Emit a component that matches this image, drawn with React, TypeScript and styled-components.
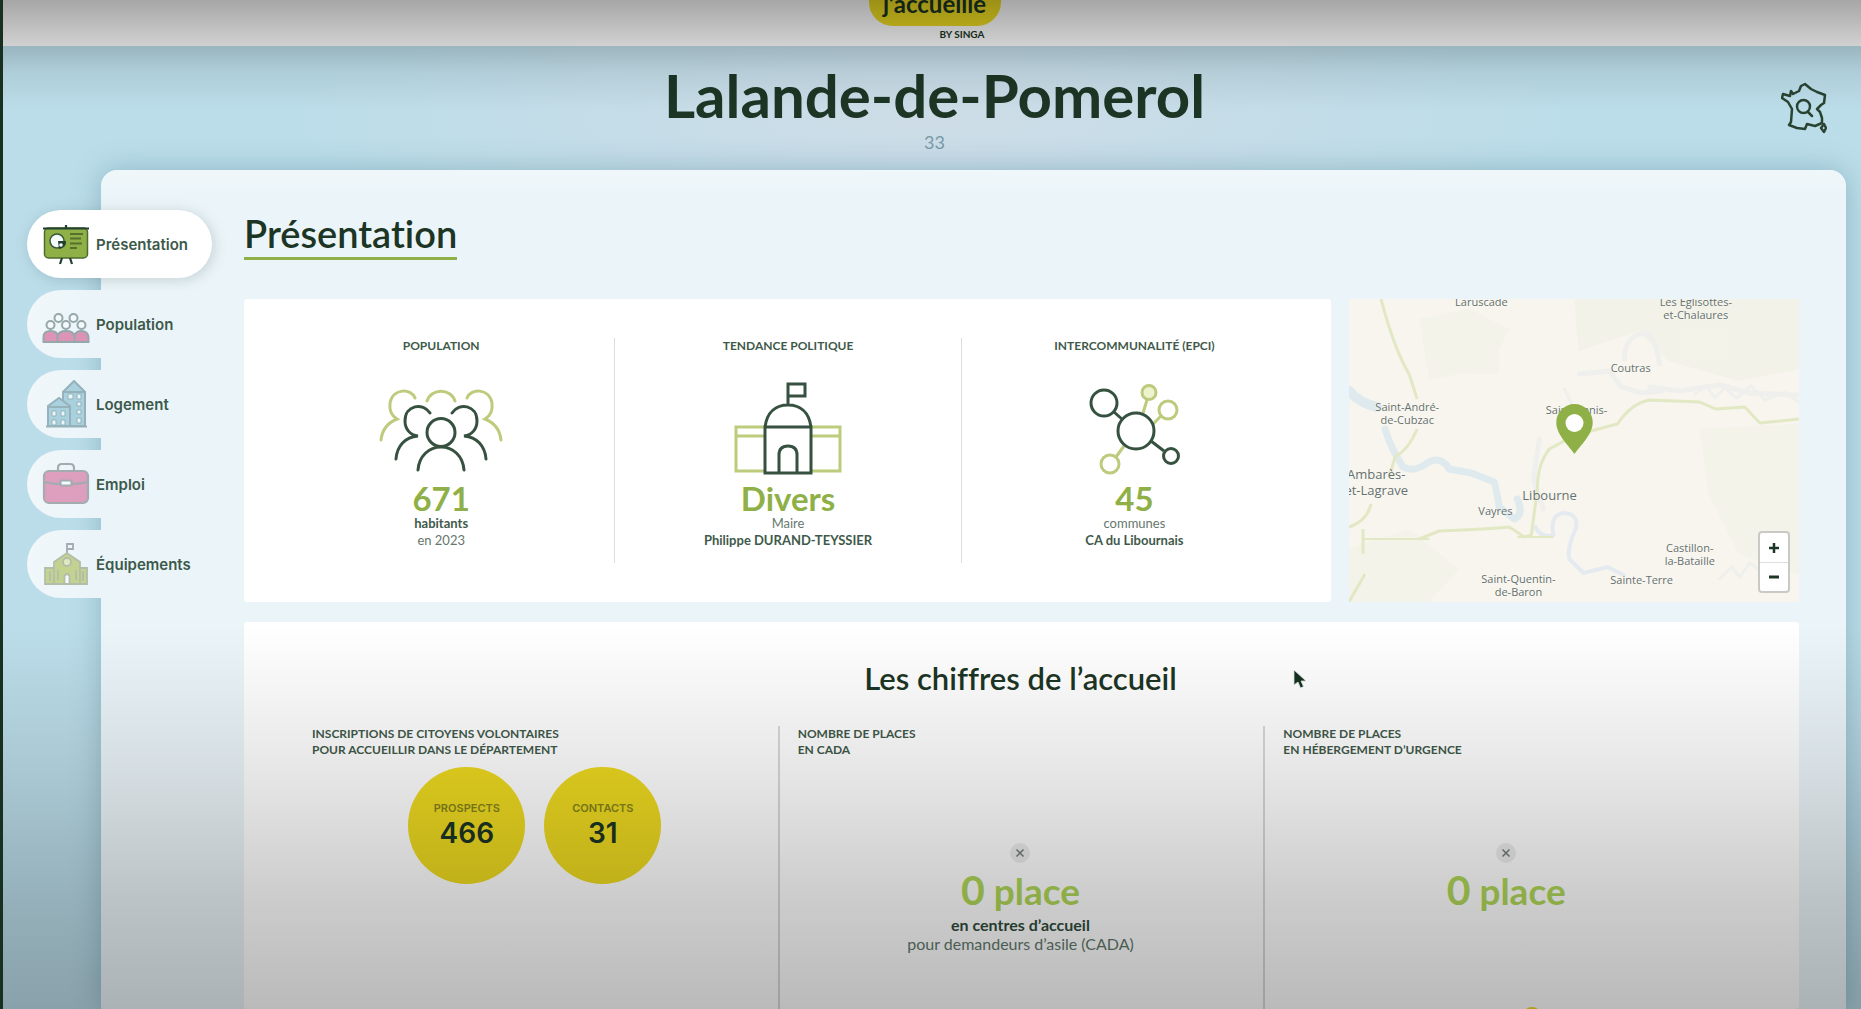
import React from "react";
import styled, { createGlobalStyle, css } from "styled-components";

const DARK = "#1c3524";
const GREEN = "#8fb046";

const Global = createGlobalStyle`
  *, *::before, *::after { box-sizing: border-box; }
  html, body { margin: 0; height: 100%; }
  body {
    font-family: Lato, "Liberation Sans", sans-serif;
    font-variant-ligatures: no-common-ligatures;
    color: ${DARK};
    overflow: hidden;
  }
  h1, h2, p { margin: 0; }
`;

const Page = styled.div`
  position: relative;
  height: 100vh;
  overflow: hidden;
  display: flex;
  flex-direction: column;
  border-left: 3px solid #18301f;
  background:
    radial-gradient(ellipse 640px 120px at 50% 120px, rgba(214, 220, 230, 0.7), rgba(214, 220, 230, 0)),
    #bbdde9;
`;

const Shade = styled.div`
  position: absolute;
  inset: 0;
  z-index: 5;
  pointer-events: none;
  background:
    linear-gradient(rgba(0, 0, 0, 0.35) 0, rgba(0, 0, 0, 0.18) 46px, rgba(0, 0, 0, 0.07) 72px, rgba(0, 0, 0, 0) 110px),
    linear-gradient(rgba(0, 0, 0, 0) 62%, rgba(0, 0, 0, 0.04) 68%, rgba(0, 0, 0, 0.1) 77%, rgba(0, 0, 0, 0.2) 89%, rgba(0, 0, 0, 0.27) 100%);
`;

const TopBar = styled.header`
  flex: none;
  height: 46px;
  padding-left: 5px;
  display: flex;
  justify-content: center;
  align-items: flex-end;
  background: #fff;
`;

const Brand = styled.a`
  display: flex;
  flex-direction: column;
  align-items: center;
  color: ${DARK};
  text-decoration: none;
`;

const BrandPill = styled.span`
  display: block;
  width: 132px;
  height: 56px;
  padding: 20px 0 0;
  border-radius: 24px;
  background: #f0de22;
  font-size: 24px;
  line-height: 28px;
  font-weight: 700;
  text-align: center;
`;

const BrandBy = styled.span`
  align-self: flex-end;
  padding: 0 16px 4px 0;
  font-size: 10px;
  line-height: 16px;
  font-weight: 700;
`;

const Hero = styled.div`
  flex: none;
  height: 124px;
  padding: 15px 34px 0 39px;
  display: grid;
  grid-template-columns: 48px 1fr 48px;
`;

const HeroText = styled.div`
  grid-column: 2;
  text-align: center;
`;

const City = styled.h1`
  font-size: 60px;
  line-height: 68px;
  font-weight: 700;
`;

const Dept = styled.p`
  font-size: 18px;
  line-height: 26px;
  color: #7899a4;
`;

const MapButton = styled.button`
  align-self: start;
  justify-self: end;
  margin: 21px 0 0;
  padding: 0;
  border: 0;
  background: none;
  line-height: 0;
`;

const Body = styled.div`
  flex: 1;
  min-height: 0;
  display: flex;
  padding: 0 15px 0 24px;
`;

const Nav = styled.nav`
  position: relative;
  z-index: 2;
  flex: none;
  width: 74px;
  padding-top: 40px;
  display: flex;
  flex-direction: column;
  gap: 12px;
`;

const NavLink = styled.a<{ $active?: boolean }>`
  flex: none;
  width: 185px;
  height: 68px;
  padding-left: 15px;
  display: flex;
  align-items: center;
  gap: 6px;
  border-radius: 34px;
  background: linear-gradient(90deg, #f1f7fb, #ebf5f9 60px);
  color: #3c594a;
  font-family: Inter, "Liberation Sans", sans-serif;
  font-size: 15px;
  font-weight: 600;
  text-decoration: none;
  ${(p) =>
    p.$active &&
    css`
      background: #fff;
      box-shadow: 2px 2px 14px rgba(60, 80, 90, 0.22);
    `}
`;

const NavIcon = styled.svg<{ $faded?: boolean }>`
  flex: none;
  width: 48px;
  height: 48px;
  opacity: ${(p) => (p.$faded ? 0.45 : 1)};
`;

const Panel = styled.main`
  flex: 1;
  min-width: 0;
  padding: 41px 47px 0 143px;
  display: flex;
  flex-direction: column;
  border-radius: 16px 16px 0 0;
  background: linear-gradient(#f0f7fa 0, #ebf5f9 24px, #ebf5f9 60%, #ebf4f9 100%);
  box-shadow: 0 0 28px rgba(60, 110, 130, 0.35);
`;

const Heading = styled.h2`
  align-self: flex-start;
  border-bottom: 3px solid ${GREEN};
  padding-bottom: 2px;
  font-size: 38px;
  line-height: 44px;
  font-weight: 600;
`;

const TopGrid = styled.div`
  flex: none;
  margin-top: 39px;
  display: grid;
  grid-template-columns: 29fr 12fr;
  gap: 18px;
`;

const Card = styled.section`
  padding: 39px 24px;
  background: #fff;
  border-radius: 3px;
`;

const StatRow = styled.div`
  display: grid;
  grid-template-columns: repeat(3, 1fr);
`;

const Stat = styled.article`
  height: 225px;
  display: flex;
  flex-direction: column;
  align-items: center;
  text-align: center;
  & + & { border-left: 1px solid #d9dddd; }
`;

const Label = styled.p`
  font-size: 12px;
  line-height: 16px;
  font-weight: 700;
  color: #3f5a4a;
`;

const StatIcon = styled.svg`
  flex: none;
  width: 128px;
  height: 96px;
  margin: 26px 0 5px;
  fill: none;
  stroke-width: 3;
`;

const Value = styled.p`
  font-size: 33px;
  line-height: 34px;
  font-weight: 700;
  color: ${GREEN};
`;

const Note = styled.p<{ $strong?: boolean }>`
  font-size: 13px;
  line-height: 17px;
  font-weight: ${(p) => (p.$strong ? 700 : 400)};
  color: ${(p) => (p.$strong ? "#3f5a4a" : "#66776e")};
`;

const MapBox = styled.section`
  position: relative;
  overflow: hidden;
  background: #f7f5ee;
`;

const MapArt = styled.svg`
  display: block;
  position: absolute;
  inset: 0;
  width: 100%;
  height: 100%;
`;

const Place = styled.span<{ $big?: boolean }>`
  position: absolute;
  transform: translate(-50%, 0);
  font-family: "Open Sans", "Noto Sans", sans-serif;
  font-size: ${(p) => (p.$big ? 13 : 11)}px;
  line-height: ${(p) => (p.$big ? 16 : 13)}px;
  text-align: center;
  white-space: pre;
  color: #66706c;
  text-shadow: 0 0 2px #fff;
`;

const Pin = styled.svg`
  position: absolute;
  left: 46%;
  top: 105px;
  width: 37px;
  height: 50px;
`;

const Zoom = styled.div`
  position: absolute;
  right: 9px;
  bottom: 9px;
  width: 32px;
  display: flex;
  flex-direction: column;
  border: 2px solid #c9c9c6;
  border-radius: 4px;
  background: #fff;
`;

const ZoomButton = styled.button`
  height: 29px;
  padding: 0;
  border: 0;
  background: none;
  line-height: 0;
  color: ${DARK};
  & + & { border-top: 1px solid #ddd; }
`;

const Figures = styled.section`
  flex: 1;
  margin-top: 20px;
  padding: 36px 50px 0 48px;
  display: flex;
  flex-direction: column;
  background: #fff;
  border-radius: 3px;
`;

const FiguresTitle = styled.h2`
  font-size: 31px;
  line-height: 40px;
  font-weight: 600;
  text-align: center;
`;

const FigureRow = styled.div`
  flex: 1;
  margin-top: 28px;
  display: grid;
  grid-template-columns: repeat(3, 1fr);
`;

const Figure = styled.article`
  position: relative;
  display: flex;
  flex-direction: column;
  align-items: center;
  padding: 0 20px;
  & + & {
    padding-left: 18px;
    border-left: 2px solid #d6dada;
  }
`;

const FigureLabel = styled(Label)`
  align-self: flex-start;
  white-space: pre-line;
`;

const Bubbles = styled.div`
  display: flex;
  gap: 19px;
  padding-top: 9px;
`;

const Bubble = styled.div`
  width: 117px;
  height: 117px;
  padding-top: 33px;
  border-radius: 50%;
  background: #eeda20;
  font-family: Inter, "Liberation Sans", sans-serif;
  text-align: center;
`;

const BubbleLabel = styled.p`
  font-size: 11px;
  line-height: 16px;
  font-weight: 600;
  color: #84831a;
`;

const BubbleValue = styled.p`
  font-size: 28px;
  line-height: 34px;
  font-weight: 600;
`;

const Badge = styled.svg`
  width: 20px;
  height: 20px;
  margin: 85px 0 3px;
`;

const Places = styled.p`
  font-size: 37px;
  line-height: 48px;
  font-weight: 700;
  color: #b0d758;
`;

const Zero = styled.span`
  font-size: 41px;
`;

const PlacesNote = styled.p<{ $strong?: boolean }>`
  font-size: 16px;
  line-height: 19px;
  font-weight: ${(p) => (p.$strong ? 700 : 400)};
  color: ${(p) => (p.$strong ? "#2f4c3c" : "#5f796c")};
`;

const NextDot = styled.span`
  position: absolute;
  left: 53%;
  bottom: -18px;
  width: 20px;
  height: 20px;
  border-radius: 50%;
  background: #eeda20;
`;

const Cursor = styled.svg`
  position: absolute;
  left: 1290px;
  top: 669px;
  width: 14px;
  height: 20px;
  z-index: 6;
`;

const PresentationIcon = () => (
  <NavIcon viewBox="0 0 48 48">
    <rect x="2.500" y="8" width="43" height="30" rx="4" fill="#8fb046" stroke="#4d6b2f" strokeWidth="1.500" />
    <path d="M1 8.500h46M24 5v3M20 38l-2 6M28 38l2 6" stroke="#22402f" strokeWidth="2.200" fill="none" />
    <circle cx="15" cy="21" r="7" fill="#f4fafa" stroke="#38573b" strokeWidth="1.500" />
    <path d="M16 21h8a7 7 0 0 1-7 8z" fill="#22402f" />
    <circle cx="19" cy="25" r="1.800" fill="#f4fafa" />
    <path d="M28 14h13M28 18.500h11M28 23.500h12M28 28h7" stroke="#55702a" strokeWidth="1.800" />
  </NavIcon>
);

const PeopleIcon = () => (
  <NavIcon viewBox="0 0 48 48" $faded>
    <g fill="#fff" stroke="#2c4a4a" strokeWidth="2">
      <path d="M1.500 42v-5q0-6 7-6t7 5q1-5 8.500-5t8.500 5q1-5 7-5t7 6v5z" fill="#c81e64" />
      <circle cx="8.500" cy="25" r="4" />
      <circle cx="24" cy="25" r="4" />
      <circle cx="39.500" cy="25" r="4" />
      <circle cx="16.500" cy="18" r="4" />
      <circle cx="31.500" cy="18" r="4" />
      <path d="M15.500 42v-6M32.500 42v-6" />
    </g>
  </NavIcon>
);

const HousingIcon = () => (
  <NavIcon viewBox="0 0 48 48" $faded>
    <g fill="#5aa6bd" stroke="#2c6070" strokeWidth="2">
      <path d="M21 46V12L32 1l11 11v34z" />
      <path d="M6 46V26L17 18l11 8v20z" />
      <path d="M4 46.500h41M20 12h24M5 27h24" />
      <path d="M10 31h4v5h-4zM19 31h4v5h-4zM10 40h4v5h-4zM19 40h4v5h-4z" fill="#e8f6fa" strokeWidth="1" />
      <path d="M26 14h5v5h-5zM35 14h4v5h-4zM35 22h4v4h-4zM35 30h4v4h-4zM35 38h4v5h-4z" fill="#e8f6fa" strokeWidth="1" />
    </g>
  </NavIcon>
);

const JobIcon = () => (
  <NavIcon viewBox="0 0 48 48" $faded>
    <g stroke="#4b5357" strokeWidth="2.200" fill="none">
      <path d="M16 11V8q0-4 4-4h8q4 0 4 4v3" />
      <rect x="2" y="11" width="44" height="32" rx="5" fill="#c93674" />
      <path d="M2 22q10 2 16 2M46 22q-10 2-16 2" />
      <rect x="18.500" y="20.500" width="11" height="5" rx="1" fill="#fff" />
    </g>
  </NavIcon>
);

const FacilityIcon = () => (
  <NavIcon viewBox="0 0 48 48" $faded>
    <g stroke="#6b7a4a" strokeWidth="1.800" fill="#93a812">
      <path d="M25 14V4h6v5h-6" fill="none" stroke="#4b5357" />
      <path d="M3 28h42v16H3z" />
      <path d="M12 44V22l13-9 13 9v22z" />
      <circle cx="25" cy="22" r="4" fill="#cfd97a" />
      <path d="M22.500 44v-8q2.500-4 5 0v8z" fill="#fff" />
      <path d="M8 31v10M16 30v10M34 30v10M41 31v10" fill="none" />
    </g>
  </NavIcon>
);

const NAV = [
  { label: "Présentation", Icon: PresentationIcon, active: true },
  { label: "Population", Icon: PeopleIcon },
  { label: "Logement", Icon: HousingIcon },
  { label: "Emploi", Icon: JobIcon },
  { label: "Équipements", Icon: FacilityIcon },
];

const LIME = "#bccb7c";
const INK = "#36513f";

const CrowdIcon = () => (
  <StatIcon viewBox="0 0 128 96" strokeLinecap="round">
    <g stroke={LIME}>
      <path d="M38 18C34 8 16 8 13 23C12 31 15 36 20 39C10 43 5 51 4 60" />
      <path d="M90 18C94 8 112 8 115 23C116 31 113 36 108 39C118 43 123 51 124 60" />
      <path d="M50 21C54 8 74 8 78 21" />
    </g>
    <g stroke={INK}>
      <path d="M53 33C46 22 28 25 28 41C28 49 33 55 41 56C28 57 20 66 19 79" />
      <path d="M75 33C82 22 100 25 100 41C100 49 95 55 87 56C100 57 108 66 109 79" />
      <circle cx="64" cy="52.500" r="14" />
      <path d="M41 90C42 76 52 67 64 67S86 76 87 90" />
    </g>
  </StatIcon>
);

const HallIcon = () => (
  <StatIcon viewBox="0 0 128 96">
    <path stroke={LIME} d="M41 47H12v44h29M12 56h29M87 47h29v44H87M116 56H87" />
    <g stroke={INK}>
      <path d="M41 47h46v46H41zM41 47C43 32 52 25 64 25S85 32 87 47M64 25V4h17v12H64" />
      <path d="M55 93V75q0-9 9-9t9 9v18" />
    </g>
  </StatIcon>
);

const NetworkIcon = () => (
  <StatIcon viewBox="0 0 128 96">
    <g stroke={LIME}>
      <circle cx="79" cy="12.500" r="7" fill="#eef2cf" />
      <circle cx="98" cy="30" r="9" />
      <circle cx="40" cy="84" r="9" />
      <path d="M77 20l-4 13M91 36l-8 8M46 77l8-11" />
    </g>
    <g stroke={INK}>
      <circle cx="66" cy="51" r="18" />
      <circle cx="34" cy="23" r="13" />
      <circle cx="101" cy="76" r="7.500" />
      <path d="M44 32l9 8M81 61l13 10" />
    </g>
  </StatIcon>
);

const PLACES: { text: string; x: number; y: number; big?: boolean }[] = [
  { text: "Laruscade", x: 132, y: -4 },
  { text: "Les Églisottes-\net-Chalaures", x: 346, y: -4 },
  { text: "Coutras", x: 281, y: 62 },
  { text: "Saint-Denis-", x: 227, y: 104 },
  { text: "Saint-André-\nde-Cubzac", x: 58, y: 101 },
  { text: "Ambarès-\net-Lagrave", x: 27, y: 167, big: true },
  { text: "Libourne", x: 200, y: 188, big: true },
  { text: "Vayres", x: 146, y: 205 },
  { text: "Castillon-\nla-Bataille", x: 340, y: 242 },
  { text: "Saint-Quentin-\nde-Baron", x: 169, y: 273 },
  { text: "Sainte-Terre", x: 292, y: 274 },
];

const AreaMap = () => (
  <MapBox aria-label="Carte">
    <MapArt viewBox="0 0 449 303" preserveAspectRatio="none">
      <g fill="#f2f2e8">
        <path d="M225 0h224v70l-60 12-70-20-30-30-60 20z" />
        <path d="M70 20l50-10 40 20-20 40-60 10zM350 130l99 -5v150l-60-20-30-60zM0 250l60-20 50 40-30 33H0z" opacity="0.700" />
        <path d="M330 30h50v30h-50zM120 50h30v25h-30z" opacity="0.800" />
      </g>
      <g fill="none" stroke="#efefed" strokeWidth="5" strokeLinecap="round">
        <path d="M275 60q0-20 15-25t20 30M230 75l30-3 12 16 20 6 20-2M190 140l-6 40 10 30M300 88l30 4 40-6 30 8 49 2" />
        <path d="M215 90l10 20M345 95l12-8 8 12 10-10 12 10 14-12 14 14 20-8 14 10M370 280l12-12 8 10 10-14 14 10" strokeWidth="3" />
      </g>
      <g fill="none" stroke="#dfeaee" strokeLinecap="round" strokeLinejoin="round">
        <path d="M0 92Q10 104 28 108" strokeWidth="10" />
        <path d="M36 130Q42 150 54 168Q64 174 78 164Q92 156 100 170L122 174L145 183Q148 195 150 208L165 220Q175 215 168 200" strokeWidth="7" />
        <path d="M186 228q6 12 18 8q-4-20 10-22q14 0 13 14q-10 22-7 32l14 14 24-6 16 8" strokeWidth="4" stroke="#e4eaf0" />
      </g>
      <g fill="none" stroke="#e2e8c4" strokeWidth="3" strokeLinejoin="round">
        <path d="M32 0Q45 50 60 75L68 100M68 130Q60 150 46 158L40 178M22 205Q18 222 0 228M14 230L14 255M0 303L16 275" />
        <path d="M70 240L90 232Q140 230 160 228L175 238L182 236L188 190Q188 165 200 150L222 138Q255 128 268 125Q282 104 300 101L350 103L366 110L395 108L410 124L449 120" />
        <path d="M14 240L80 240M168 238h36" strokeWidth="2" />
      </g>
    </MapArt>
    {PLACES.map((p) => (
      <Place key={p.text} $big={p.big} style={{ left: `${(p.x / 449) * 100}%`, top: p.y }}>
        {p.text}
      </Place>
    ))}
    <Pin viewBox="0 0 37 50">
      <path fill={GREEN} fillRule="evenodd" d="M18.500 0A18.200 18.200 0 0 0 0.300 18.500C0.300 31 14 43 18.500 50C23 43 36.700 31 36.700 18.500A18.200 18.200 0 0 0 18.500 0Z" />
      <circle cx="18.500" cy="19" r="9" fill="#fff" />
    </Pin>
    <Zoom>
      <ZoomButton type="button" aria-label="Zoom avant">
        <svg width="10" height="10" viewBox="0 0 10 10"><path d="M5 0v10M0 5h10" stroke="currentColor" strokeWidth="2.500" /></svg>
      </ZoomButton>
      <ZoomButton type="button" aria-label="Zoom arrière">
        <svg width="10" height="10" viewBox="0 0 10 10"><path d="M0 5h10" stroke="currentColor" strokeWidth="3" /></svg>
      </ZoomButton>
    </Zoom>
  </MapBox>
);

const Cross = () => (
  <Badge viewBox="0 0 20 20">
    <circle cx="10" cy="10" r="10" fill="#000" opacity="0.070" />
    <path d="M6.500 6.500l7 7M13.500 6.500l-7 7" stroke="#6f7d77" strokeWidth="1.500" />
  </Badge>
);

export default function App() {
  return (
    <>
      <Global />
      <Page>
        <TopBar>
          <Brand href="#">
            <BrandPill>j’accueille</BrandPill>
            <BrandBy>BY SINGA</BrandBy>
          </Brand>
        </TopBar>
        <Hero>
          <HeroText>
            <City>Lalande-de-Pomerol</City>
            <Dept>33</Dept>
          </HeroText>
          <MapButton type="button" aria-label="Rechercher une commune">
            <svg width="46" height="52" viewBox="0 0 46 52" fill="none" stroke="#2a4432" strokeWidth="2.500" strokeLinejoin="round" strokeLinecap="round">
              <path d="M24 2L20 4L18 9L12 12L10 9L9 14L2 12L1 16L7 20L11 27L10 40L8 43L16 46L24 47L26 42L34 44L41 41L41 36L39 30L36 27L40 23L43 21L44 13L36 10L30 7Z" />
              <circle cx="22.500" cy="24.500" r="6.500" />
              <path d="M27 30l4 4M43 42l2 4l-2 4l-3-4z" />
            </svg>
          </MapButton>
        </Hero>
        <Body>
          <Nav>
            {NAV.map(({ label, Icon, active }) => (
              <NavLink key={label} href="#" $active={active}>
                <Icon />
                {label}
              </NavLink>
            ))}
          </Nav>
          <Panel>
            <Heading>Présentation</Heading>
            <TopGrid>
              <Card>
                <StatRow>
                  <Stat>
                    <Label>POPULATION</Label>
                    <CrowdIcon />
                    <Value>671</Value>
                    <Note $strong>habitants</Note>
                    <Note>en 2023</Note>
                  </Stat>
                  <Stat>
                    <Label>TENDANCE POLITIQUE</Label>
                    <HallIcon />
                    <Value>Divers</Value>
                    <Note>Maire</Note>
                    <Note $strong>Philippe DURAND-TEYSSIER</Note>
                  </Stat>
                  <Stat>
                    <Label>INTERCOMMUNALITÉ (EPCI)</Label>
                    <NetworkIcon />
                    <Value>45</Value>
                    <Note>communes</Note>
                    <Note $strong>CA du Libournais</Note>
                  </Stat>
                </StatRow>
              </Card>
              <AreaMap />
            </TopGrid>
            <Figures>
              <FiguresTitle>Les chiffres de l’accueil</FiguresTitle>
              <FigureRow>
                <Figure>
                  <FigureLabel>{"INSCRIPTIONS DE CITOYENS VOLONTAIRES\nPOUR ACCUEILLIR DANS LE DÉPARTEMENT"}</FigureLabel>
                  <Bubbles>
                    <Bubble>
                      <BubbleLabel>PROSPECTS</BubbleLabel>
                      <BubbleValue>466</BubbleValue>
                    </Bubble>
                    <Bubble>
                      <BubbleLabel>CONTACTS</BubbleLabel>
                      <BubbleValue>31</BubbleValue>
                    </Bubble>
                  </Bubbles>
                </Figure>
                <Figure>
                  <FigureLabel>{"NOMBRE DE PLACES\nEN CADA"}</FigureLabel>
                  <Cross />
                  <Places><Zero>0</Zero> place</Places>
                  <PlacesNote $strong>en centres d’accueil</PlacesNote>
                  <PlacesNote>pour demandeurs d’asile (CADA)</PlacesNote>
                </Figure>
                <Figure>
                  <FigureLabel>{"NOMBRE DE PLACES\nEN HÉBERGEMENT D’URGENCE"}</FigureLabel>
                  <Cross />
                  <Places><Zero>0</Zero> place</Places>
                  <NextDot />
                </Figure>
              </FigureRow>
            </Figures>
          </Panel>
        </Body>
        <Shade />
        <Cursor viewBox="0 0 14 20">
          <path d="M1 1v15l4-3 2.500 6 3-1.500L8 12h5z" fill="#16301f" stroke="#d8dcda" strokeWidth="0.800" />
        </Cursor>
      </Page>
    </>
  );
}
